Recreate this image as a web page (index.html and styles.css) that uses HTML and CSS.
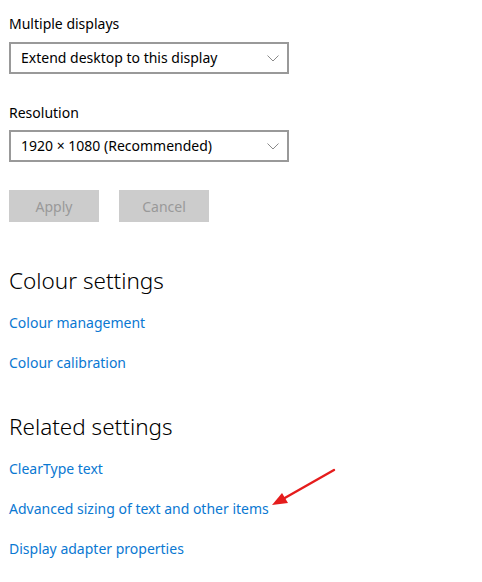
FILE: index.html
```html
<!DOCTYPE html>
<html>
<head>
<meta charset="utf-8">
<link rel="stylesheet" href="styles.css">
</head>
<body>
<div class="page">
  <div class="label first">Multiple displays</div>
  <div class="select"><span>Extend desktop to this display</span>
    <svg class="chev" width="12" height="7" viewBox="0 0 12 7"><path d="M0.5 0.5 L6 6 L11.5 0.5" fill="none" stroke="#8a8a8a" stroke-width="1"/></svg>
  </div>
  <div class="label second">Resolution</div>
  <div class="select"><span>1920 × 1080 (Recommended)</span>
    <svg class="chev" width="12" height="7" viewBox="0 0 12 7"><path d="M0.5 0.5 L6 6 L11.5 0.5" fill="none" stroke="#8a8a8a" stroke-width="1"/></svg>
  </div>
  <div class="buttons">
    <div class="btn">Apply</div>
    <div class="btn">Cancel</div>
  </div>
  <h2 class="heading h-colour">Colour settings</h2>
  <a class="link">Colour management</a>
  <a class="link">Colour calibration</a>
  <h2 class="heading h-related">Related settings</h2>
  <a class="link">ClearType text</a>
  <a class="link">Advanced sizing of text and other items</a>
  <a class="link">Display adapter properties</a>
</div>
<svg class="arrow" width="482" height="582" viewBox="0 0 482 582">
  <line x1="334" y1="470" x2="283" y2="499" stroke="#e51c1c" stroke-width="2.4" stroke-linecap="round"/>
  <polygon points="272,505 282,493 288,503" fill="#e51c1c"/>
</svg>
</body>
</html>
```
FILE: styles.css
```css
html, body {
  margin: 0;
  padding: 0;
  background: #fff;
}
body {
  font-family: "Noto Sans", "Open Sans", sans-serif;
  font-size: 14px;
  color: #000;
  position: relative;
  width: 482px;
  height: 582px;
  overflow: hidden;
}
.page {
  padding-left: 9px;
  display: flex;
  flex-direction: column;
  align-items: flex-start;
}
.label {
  line-height: 20px;
  height: 20px;
  margin-bottom: 8px;
}
.label.first { margin-top: 14px; }
.label.second { margin-top: 29px; margin-bottom: 7px; }
.select {
  box-sizing: border-box;
  width: 280px;
  height: 32px;
  border: 2px solid #999;
  display: flex;
  align-items: center;
  justify-content: space-between;
  padding: 0 8px 0 10px;
}
.select span { line-height: 20px; }
.chev { display: block; margin-top: 1px; }
.buttons {
  display: flex;
  gap: 20px;
  margin-top: 28px;
}
.btn {
  width: 90px;
  height: 32px;
  background: #ccc;
  color: #999;
  display: flex;
  align-items: center;
  justify-content: center;
}
.heading {
  font-weight: 300;
  font-size: 22.5px;
  margin: 0;
  line-height: 32px;
  height: 32px;
}
.h-colour { margin-top: 43px; }
.h-related { margin-top: 38px; }
.link {
  color: #0a78d2;
  line-height: 20px;
  height: 20px;
  margin-top: 20px;
}
.heading + .link { margin-top: 16px; }
.arrow {
  position: absolute;
  left: 0;
  top: 0;
  pointer-events: none;
}
```
